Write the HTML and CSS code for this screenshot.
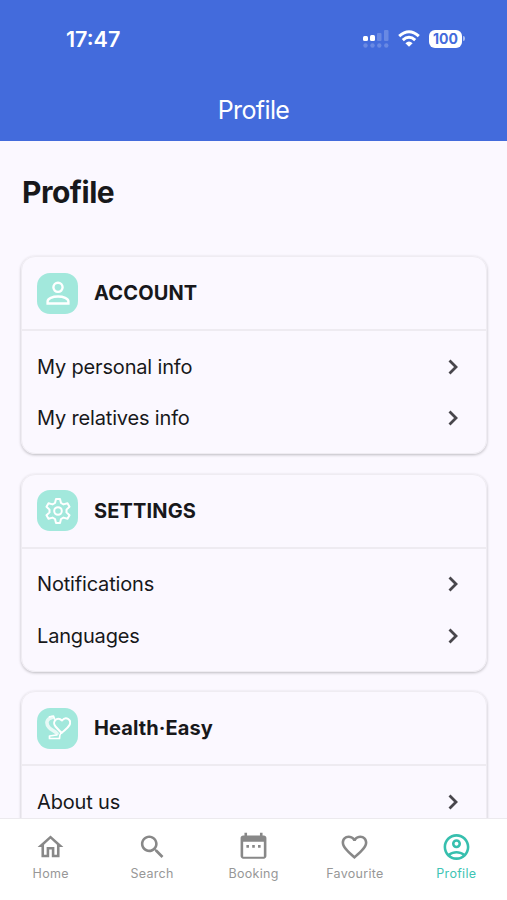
FILE: index.html
```html
<!DOCTYPE html>
<html lang="en">
<head>
    <meta charset="UTF-8">
    <meta name="viewport" content="width=device-width, initial-scale=1.0">
    <title>Profile</title>
    <link rel="stylesheet" href="styles.css">
</head>
<body>
    <header>
        <div class="status-bar">
            <span class="time">17:47</span>
            <div class="status-icons">
                <svg class="signal" viewBox="0 0 26 18">
                    <g fill="#fff">
                        <rect x="0" y="6" width="5" height="5" rx="1.5"/>
                        <rect x="7" y="5" width="5" height="6" rx="1.5"/>
                    </g>
                    <g fill="#fff" opacity=".2">
                        <rect x="14" y="3" width="4.5" height="8" rx="1"/>
                        <rect x="21" y="0" width="4.5" height="11" rx="1"/>
                        <circle cx="2.5" cy="15.5" r="2.2"/>
                        <circle cx="9.5" cy="15.5" r="2.2"/>
                        <circle cx="16.3" cy="15.5" r="2.2"/>
                        <circle cx="23.3" cy="15.5" r="2.2"/>
                    </g>
                </svg>
                <svg class="wifi" viewBox="0 0 22 17">
                    <g fill="none" stroke="#fff" stroke-width="3">
                        <path d="M1.200 6.200Q11-2.800 20.800 6.200"/>
                        <path d="M4.800 10.200Q11 4.400 17.200 10.200"/>
                    </g>
                    <path d="M11 16.800L7.400 13.300Q11 9.800 14.600 13.300z" fill="#fff"/>
                </svg>
                <span class="battery">100</span>
                <span class="battery-tip"></span>
            </div>
        </div>
        <div class="header-title">Profile</div>
    </header>

    <main>
        <h1>Profile</h1>

        <section class="card">
            <div class="card-header">
                <span class="card-icon">
                    <svg viewBox="0 0 26 26" fill="none" stroke="#fff" stroke-width="2.400">
                        <circle cx="13" cy="7.300" r="4.600"/>
                        <path d="M2.600 23.500v-2c0-3.200 5-5 10.400-5s10.400 1.800 10.400 5v2z"/>
                    </svg>
                </span>
                <h2>ACCOUNT</h2>
            </div>
            <ul>
                <li>My personal info <svg class="chevron" viewBox="0 0 10 16"><path d="M1.500 1.500L8 8l-6.500 6.500"/></svg></li>
                <li>My relatives info <svg class="chevron" viewBox="0 0 10 16"><path d="M1.500 1.500L8 8l-6.500 6.500"/></svg></li>
            </ul>
        </section>

        <section class="card">
            <div class="card-header">
                <span class="card-icon">
                    <svg viewBox="0 0 26 26" fill="none" stroke="#fff" stroke-width="2" stroke-linejoin="round">
                        <path d="M11 1h4l1 4 2.500 1.400 4-1.200 2 3.500-3 2.900v2.800l3 2.900-2 3.500-4-1.200-2.500 1.400-1 4h-4l-1-4-2.500-1.400-4 1.200-2-3.500 3-2.900v-2.800l-3-2.900 2-3.500 4 1.200L10 5z"/>
                        <circle cx="13" cy="13" r="3.800"/>
                    </svg>
                </span>
                <h2>SETTINGS</h2>
            </div>
            <ul>
                <li>Notifications <svg class="chevron" viewBox="0 0 10 16"><path d="M1.500 1.500L8 8l-6.500 6.500"/></svg></li>
                <li>Languages <svg class="chevron" viewBox="0 0 10 16"><path d="M1.500 1.500L8 8l-6.500 6.500"/></svg></li>
            </ul>
        </section>

        <section class="card">
            <div class="card-header">
                <span class="card-icon">
                    <svg viewBox="0 0 26 26" fill="none" stroke="#fff" stroke-linecap="round" stroke-linejoin="round">
                        <path stroke-width="2" d="M16.500 18L10.500 11.500C6.500 7 12 .500 17 5.500c4-5 10-.500 7.500 4.500-1.500 3-5 5-8 8z"/>
                        <path stroke-width="3.600" opacity=".75" d="M7 2.500C1.500 4 .500 8 4 12.500c2 2.500 6 3.500 8 6"/>
                        <path stroke-width="1.700" d="M4.500 1.800l4-.8 1 3M16 18c-1.500 1.500-1.500 2.500-1.500 5.500H4.500V21l7-1"/>
                    </svg>
                </span>
                <h2 class="brand">Health·Easy</h2>
            </div>
            <ul>
                <li>About us <svg class="chevron" viewBox="0 0 10 16"><path d="M1.500 1.500L8 8l-6.500 6.500"/></svg></li>
            </ul>
        </section>
    </main>

    <nav>
        <a>
            <svg viewBox="0 0 24 24"><path d="M12 5.690l5 4.500V18h-2v-6H9v6H7v-7.810l5-4.500M12 3L2 12h3v8h6v-6h2v6h6v-8h3L12 3z"/></svg>
            <span>Home</span>
        </a>
        <a>
            <svg viewBox="0 0 24 24"><path d="M15.500 14h-.79l-.28-.27C15.410 12.590 16 11.110 16 9.500 16 5.910 13.090 3 9.500 3S3 5.910 3 9.500 5.910 16 9.500 16c1.610 0 3.090-.59 4.230-1.570l.27.28v.79l5 4.990L20.490 19l-4.990-5zm-6 0C7.010 14 5 11.990 5 9.500S7.010 5 9.500 5 14 7.010 14 9.500 11.990 14 9.500 14z"/></svg>
            <span>Search</span>
        </a>
        <a>
            <svg viewBox="0 0 24 24"><path d="M20 3h-1V1h-2v2H7V1H5v2H4c-1.100 0-2 .9-2 2v14c0 1.100.9 2 2 2h16c1.100 0 2-.9 2-2V5c0-1.100-.9-2-2-2zm0 16.500H4V8h16v11.500zM6.500 10.500h2v2h-2zm4.500 0h2v2h-2zm4.500 0h2v2h-2z"/></svg>
            <span>Booking</span>
        </a>
        <a>
            <svg viewBox="0 0 24 24"><path d="M16.500 3c-1.740 0-3.410.81-4.500 2.090C10.910 3.810 9.240 3 7.500 3 4.420 3 2 5.420 2 8.500c0 3.780 3.400 6.860 8.550 11.540L12 21.350l1.450-1.320C18.600 15.360 22 12.280 22 8.500 22 5.420 19.580 3 16.500 3zm-4.400 15.550l-.1.1-.1-.1C7.140 14.240 4 11.390 4 8.500 4 6.500 5.500 5 7.500 5c1.540 0 3.040.99 3.570 2.360h1.870C13.460 5.990 14.960 5 16.500 5c2 0 3.500 1.500 3.500 3.500 0 2.890-3.140 5.740-7.900 10.050z"/></svg>
            <span>Favourite</span>
        </a>
        <a class="active">
            <svg viewBox="0 0 24 24"><path fill-rule="evenodd" d="M12 2C6.480 2 2 6.480 2 12s4.480 10 10 10 10-4.480 10-10S17.520 2 12 2zM7.350 18.500C8.660 17.560 10.260 17 12 17s3.340.56 4.650 1.500C15.340 19.440 13.740 20 12 20s-3.340-.56-4.650-1.500zm10.790-1.380C16.450 15.800 14.320 15 12 15s-4.450.8-6.140 2.120C4.700 15.730 4 13.950 4 12c0-4.420 3.580-8 8-8s8 3.580 8 8c0 1.950-.7 3.730-1.860 5.120zM12 6c-1.930 0-3.500 1.570-3.500 3.500S10.070 13 12 13s3.500-1.570 3.500-3.500S13.930 6 12 6zm0 5c-.83 0-1.500-.67-1.500-1.500S11.170 8 12 8s1.500.67 1.500 1.500S12.830 11 12 11z"/></svg>
            <span>Profile</span>
        </a>
    </nav>
</body>
</html>
```
FILE: styles.css
```css
* {
    box-sizing: border-box;
}
body {
    display: flex;
    flex-direction: column;
    height: 900px;
    margin: 0;
    overflow: hidden;
    font-family: Inter, "Liberation Sans", sans-serif;
    color: #18181b;
    background-color: #fbf8ff;
}
header {
    flex: none;
    height: 141px;
    color: white;
    background-color: #436bdc;
}
.status-bar {
    display: flex;
    justify-content: space-between;
    align-items: center;
    height: 77px;
    padding: 0 42px 0 66px;
}
.time {
    font-size: 21.5px;
    font-weight: 600;
}
.status-icons {
    display: flex;
    align-items: center;
}
.signal {
    width: 26px;
    height: 18px;
}
.wifi {
    width: 22px;
    height: 17px;
    margin: 0 9px;
}
.battery {
    width: 33px;
    height: 18px;
    border-radius: 6px;
    background-color: white;
    color: #436bdc;
    font-size: 14px;
    font-weight: 700;
    line-height: 18px;
    text-align: center;
}
.battery-tip {
    width: 2px;
    height: 5px;
    margin-left: 1px;
    border-radius: 0 2px 2px 0;
    background-color: #a9bdf0;
}
.header-title {
    font-size: 25px;
    line-height: 66px;
    letter-spacing: -0.6px;
    text-align: center;
}
main {
    flex: 1;
    min-height: 0;
    padding: 0 20px 0 21px;
    overflow: hidden;
}
h1 {
    margin: 31px 0 44px 1px;
    font-size: 30px;
    line-height: 40px;
    letter-spacing: -0.5px;
}
.card {
    height: 198px;
    margin-bottom: 19.5px;
    border: 1px solid #efecf2;
    border-radius: 14px;
    box-shadow: 0 1px 3px rgba(0, 0, 0, 0.25);
}
.card-header {
    display: flex;
    align-items: center;
    height: 74px;
    padding-left: 15px;
    border-bottom: 2px solid #eeebf1;
}
.card-icon {
    display: flex;
    align-items: center;
    justify-content: center;
    width: 41px;
    height: 41px;
    margin-right: 16px;
    border-radius: 13px;
    background-color: #a2e8dc;
}
.card-icon svg {
    width: 26px;
    height: 26px;
}
h2 {
    margin: 0;
    font-size: 20px;
    font-weight: 650;
    letter-spacing: 0.15px;
}
.brand {
    font-weight: 700;
    letter-spacing: 0.1px;
}
ul {
    margin: 0;
    padding: 10px 28px 0 15px;
    list-style: none;
}
li {
    display: flex;
    justify-content: space-between;
    align-items: center;
    height: 51.5px;
    font-size: 20px;
    letter-spacing: -0.17px;
}
.chevron {
    width: 10px;
    height: 16px;
    fill: none;
    stroke: #48464c;
    stroke-width: 2.8;
}
nav {
    flex: none;
    display: flex;
    height: 82px;
    border-top: 1px solid #eceaee;
    background-color: white;
}
nav a {
    flex: 1;
    display: flex;
    flex-direction: column;
    align-items: center;
    padding-top: 12px;
    color: #979797;
    font-size: 12.5px;
    letter-spacing: 0.3px;
}
nav svg {
    width: 31px;
    height: 32px;
    margin-bottom: 3px;
    fill: #888;
}
nav .active {
    color: #40c4b4;
}
nav .active svg {
    fill: #37bfae;
}
```
